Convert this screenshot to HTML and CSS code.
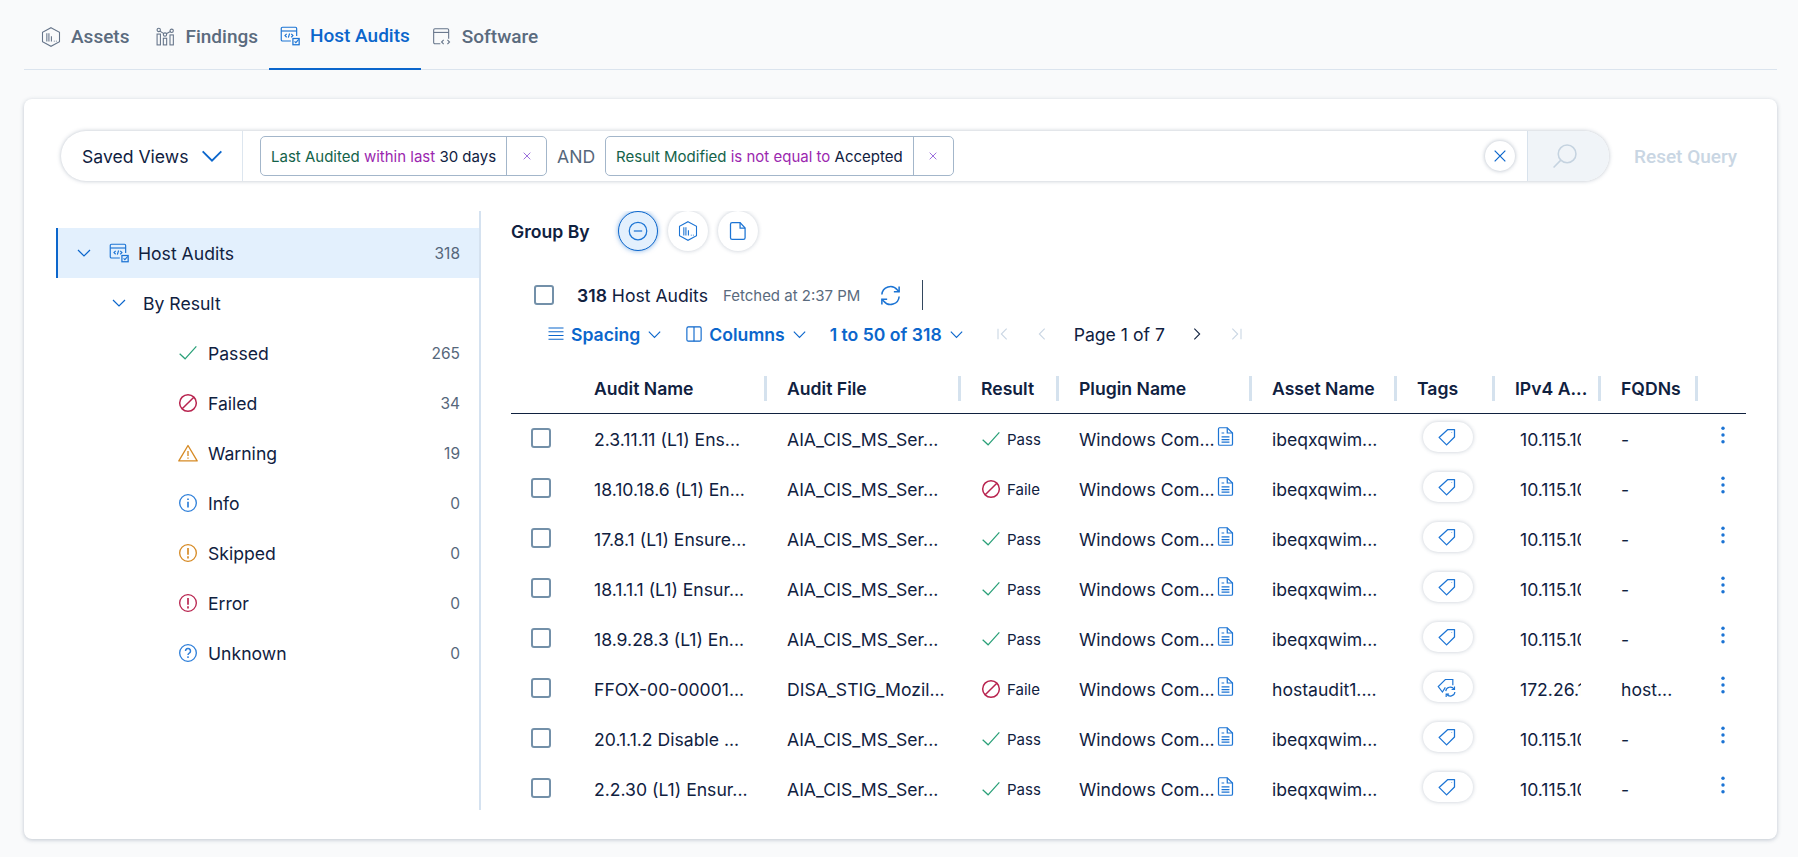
FILE: index.html
```html
<!DOCTYPE html>
<html lang="en">
  <head>
    <meta charset="UTF-8" />
    <title>Host Audits</title>
    <link rel="stylesheet" href="styles.css">
  </head>
  <body>
    <!-- icon sprite -->
    <svg class="sprite" xmlns="http://www.w3.org/2000/svg">
      <symbol id="i-asset" viewBox="0 0 24 24" fill="none" stroke="currentColor" stroke-width="1.3">
        <path d="M12 .8 22.2 6.400V17.600L12 23.200 1.800 17.600V6.400Z"/>
        <path d="M7 7.500v10M9.500 7.500v10M12.500 11v6.500M16 16.500v1M18.500 16.500v1"/>
      </symbol>
      <symbol id="i-findings" viewBox="0 0 24 24" fill="none" stroke="currentColor" stroke-width="1.3">
        <circle cx="4.500" cy="3.500" r="2"/><circle cx="12" cy="9" r="2"/><circle cx="20" cy="4.500" r="2"/>
        <path d="M6 5l4.500 3M13.500 8l5-2.500"/>
        <rect x="2.500" y="8.500" width="4" height="13"/><rect x="10" y="13.500" width="4" height="8"/><rect x="18" y="9.500" width="4" height="12"/>
      </symbol>
      <symbol id="i-host" viewBox="0 0 24 24" fill="none" stroke="currentColor" stroke-width="1.4">
        <path d="M13 18H3a1.500 1.500 0 0 1-1.500-1.500V3A1.500 1.500 0 0 1 3 1.500h15.500A1.500 1.500 0 0 1 20 3v9"/>
        <path d="M1.500 6h18.500"/>
        <path d="M8 9.500 6 11.500l2 2M13.500 9.500l2 2-2 2M11.500 9l-1.500 5"/>
        <rect x="15.500" y="15" width="7.500" height="7.500" stroke-width="1.500"/>
        <path d="M17.500 18.500l1.500 1.500 3.500-4" stroke-width="1.300"/>
      </symbol>
      <symbol id="i-soft" viewBox="0 0 24 24" fill="none" stroke="currentColor" stroke-width="1.300">
        <path d="M10 20H3.500A1.500 1.500 0 0 1 2 18.500V3.500A1.500 1.500 0 0 1 3.500 2h15A1.500 1.500 0 0 1 20 3.500V14"/>
        <path d="M2 6.500h18"/>
        <path d="M14 15.500l-2.500 2.500 2.500 2.500M18.500 15.500l2.500 2.500-2.500 2.500"/>
      </symbol>
      <symbol id="i-chev" viewBox="0 0 24 24" fill="none" stroke="currentColor" stroke-width="1.600">
        <path d="M4 8l8 8 8-8"/>
      </symbol>
      <symbol id="i-x" viewBox="0 0 24 24" fill="none" stroke="currentColor" stroke-width="1.800">
        <path d="M4 4l16 16M20 4 4 20"/>
      </symbol>
      <symbol id="i-search" viewBox="0 0 24 24" fill="none" stroke="currentColor" stroke-width="1.500">
        <circle cx="14.500" cy="9.500" r="8.500"/><path d="M8.500 15.500 1.500 22.500"/>
      </symbol>
      <symbol id="i-minus" viewBox="0 0 24 24" fill="none" stroke="currentColor" stroke-width="1.500">
        <circle cx="12" cy="12" r="10.500"/><path d="M7 12h10"/>
      </symbol>
      <symbol id="i-file" viewBox="0 0 24 24" fill="none" stroke="currentColor" stroke-width="1.500">
        <path d="M5 2h9.500l6 6.500V20a2 2 0 0 1-2 2H5a2 2 0 0 1-2-2V4a2 2 0 0 1 2-2Z"/><path d="M14.500 2v6.500h6"/>
      </symbol>
      <symbol id="i-doc" viewBox="0 0 24 24" fill="none" stroke="currentColor" stroke-width="1.400">
        <path d="M5 2h9l6 6v12.500a1.500 1.500 0 0 1-1.500 1.500h-13A1.500 1.500 0 0 1 4 20.500v-17A1.500 1.500 0 0 1 5 2Z"/>
        <path d="M14 2v6h6M7.500 8h3M7.500 12.500h9M7.500 15.500h9M7.500 18.500h9"/>
      </symbol>
      <symbol id="i-check" viewBox="0 0 24 24" fill="none" stroke="currentColor" stroke-width="1.500">
        <path d="M2 13l6.500 6L22 4"/>
      </symbol>
      <symbol id="i-fail" viewBox="0 0 24 24" fill="none" stroke="currentColor" stroke-width="1.800">
        <circle cx="12" cy="12" r="10"/><path d="M5 19 19 5"/>
      </symbol>
      <symbol id="i-warn" viewBox="0 0 24 24" fill="none" stroke="currentColor" stroke-width="1.600">
        <path d="M12 3 23 21.500H1Z" stroke-linejoin="round"/><path d="M12 9.500v6M12 17.500v1.500"/>
      </symbol>
      <symbol id="i-info" viewBox="0 0 24 24" fill="none" stroke="currentColor" stroke-width="1.600">
        <circle cx="12" cy="12" r="10"/><path d="M12 10.500v7M12 6.500v2" stroke-width="2"/>
      </symbol>
      <symbol id="i-bang" viewBox="0 0 24 24" fill="none" stroke="currentColor" stroke-width="1.600">
        <circle cx="12" cy="12" r="10"/><path d="M12 6v8M12 16v2.500" stroke-width="2"/>
      </symbol>
      <symbol id="i-help" viewBox="0 0 24 24" fill="none" stroke="currentColor" stroke-width="1.600">
        <circle cx="12" cy="12" r="10"/><path d="M9 9.500a3 3 0 1 1 4.500 2.600c-1 .6-1.500 1-1.500 2.400M12 16v2" stroke-width="1.800"/>
      </symbol>
      <symbol id="i-refresh" viewBox="0 0 24 24" fill="none" stroke="currentColor" stroke-width="1.600">
        <path d="M3 11a9 9 0 0 1 16-5l2 2M21 13a9 9 0 0 1-16 5l-2-2"/><path d="M21 2.500V8h-5.500M3 21.500V16h5.500"/>
      </symbol>
      <symbol id="i-lines" viewBox="0 0 24 24" fill="none" stroke="currentColor" stroke-width="1.500">
        <path d="M2 4h20M2 9h20M2 14h20M2 19h20"/>
      </symbol>
      <symbol id="i-cols" viewBox="0 0 24 24" fill="none" stroke="currentColor" stroke-width="1.500">
        <rect x="2.500" y="2.500" width="19" height="19" rx="2"/><path d="M12 2.500v19"/>
      </symbol>
      <symbol id="i-first" viewBox="0 0 24 24" fill="none" stroke="currentColor" stroke-width="1.600">
        <path d="M6 4v16M19 4l-8 8 8 8"/>
      </symbol>
      <symbol id="i-prev" viewBox="0 0 24 24" fill="none" stroke="currentColor" stroke-width="1.600">
        <path d="M16 4l-8 8 8 8"/>
      </symbol>
      <symbol id="i-tag" viewBox="0 0 24 24" fill="none" stroke="currentColor" stroke-width="1.500">
        <path d="M13 3h8v9l-9.500 9.500L2.500 12.500Z" stroke-linejoin="round"/><path d="M17.500 6.500v.5"/>
      </symbol>
      <symbol id="i-tagsync" viewBox="0 0 24 24" fill="none" stroke="currentColor" stroke-width="1.400">
        <path d="M10 12.500 6.500 18 1.500 11.500 10 3h9v7"/><path d="M10.500 17a5.500 5.500 0 0 1 10-2.500M21.500 18a5.500 5.500 0 0 1-10 2.500"/><path d="M21 11.500v3.500h-3.500M11 24v-3.500h3.500"/>
      </symbol>
      <symbol id="i-kebab" viewBox="0 0 24 24" fill="currentColor">
        <circle cx="12" cy="3" r="2.300"/><circle cx="12" cy="12" r="2.300"/><circle cx="12" cy="21" r="2.300"/>
      </symbol>
    </svg>

    <nav class="tabs">
      <a class="tab"><svg class="tab-icon"><use href="#i-asset"/></svg>Assets</a>
      <a class="tab"><svg class="tab-icon"><use href="#i-findings"/></svg>Findings</a>
      <a class="tab active"><svg class="tab-icon"><use href="#i-host"/></svg>Host Audits</a>
      <a class="tab"><svg class="tab-icon"><use href="#i-soft"/></svg>Software</a>
    </nav>

    <main class="card">
      <div class="query-row">
        <div class="query-bar">
          <div class="saved-views">Saved Views <svg class="saved-chev"><use href="#i-chev"/></svg></div>
          <div class="query-chips">
            <div class="chip">
              <span class="chip-text"><span class="c-field">Last Audited</span> <span class="c-op">within last</span> 30 days</span>
              <span class="chip-x"><svg><use href="#i-x"/></svg></span>
            </div>
            <span class="and">AND</span>
            <div class="chip">
              <span class="chip-text"><span class="c-field">Result Modified</span> <span class="c-op">is not equal to</span> Accepted</span>
              <span class="chip-x"><svg><use href="#i-x"/></svg></span>
            </div>
          </div>
          <button class="clear-btn"><svg><use href="#i-x"/></svg></button>
          <div class="search-btn"><svg><use href="#i-search"/></svg></div>
        </div>
        <span class="reset">Reset Query</span>
      </div>

      <div class="content">
        <aside class="tree">
          <div class="tree-row root">
            <svg class="tree-chev"><use href="#i-chev"/></svg>
            <svg class="tree-host"><use href="#i-host"/></svg>
            <span class="tree-label">Host Audits</span><span class="count">318</span>
          </div>
          <div class="tree-row group">
            <svg class="tree-chev"><use href="#i-chev"/></svg>
            <span class="tree-label">By Result</span>
          </div>
          <div class="tree-row leaf"><svg class="st green"><use href="#i-check"/></svg><span class="tree-label">Passed</span><span class="count">265</span></div>
          <div class="tree-row leaf"><svg class="st red"><use href="#i-fail"/></svg><span class="tree-label">Failed</span><span class="count">34</span></div>
          <div class="tree-row leaf"><svg class="st orange"><use href="#i-warn"/></svg><span class="tree-label">Warning</span><span class="count">19</span></div>
          <div class="tree-row leaf"><svg class="st blue"><use href="#i-info"/></svg><span class="tree-label">Info</span><span class="count">0</span></div>
          <div class="tree-row leaf"><svg class="st orange"><use href="#i-bang"/></svg><span class="tree-label">Skipped</span><span class="count">0</span></div>
          <div class="tree-row leaf"><svg class="st red"><use href="#i-bang"/></svg><span class="tree-label">Error</span><span class="count">0</span></div>
          <div class="tree-row leaf"><svg class="st blue"><use href="#i-help"/></svg><span class="tree-label">Unknown</span><span class="count">0</span></div>
        </aside>

        <section class="results">
          <div class="group-by">
            <strong>Group By</strong>
            <button class="round selected"><svg><use href="#i-minus"/></svg></button>
            <button class="round"><svg><use href="#i-asset"/></svg></button>
            <button class="round"><svg><use href="#i-file"/></svg></button>
          </div>

          <div class="summary">
            <span class="box"></span>
            <span class="total"><b>318</b> Host Audits</span>
            <span class="fetched">Fetched at 2:37 PM</span>
            <svg class="refresh"><use href="#i-refresh"/></svg>
            <span class="vline"></span>
          </div>

          <div class="toolbar">
            <span class="tool"><svg class="tool-icon"><use href="#i-lines"/></svg>Spacing<svg class="tool-chev"><use href="#i-chev"/></svg></span>
            <span class="tool"><svg class="tool-icon"><use href="#i-cols"/></svg>Columns<svg class="tool-chev"><use href="#i-chev"/></svg></span>
            <span class="tool">1 to 50 of 318<svg class="tool-chev"><use href="#i-chev"/></svg></span>
            <span class="pager">
              <svg class="pg off"><use href="#i-first"/></svg>
              <svg class="pg off"><use href="#i-prev"/></svg>
              <span class="page-text">Page 1 of 7</span>
              <svg class="pg flip"><use href="#i-prev"/></svg>
              <svg class="pg off flip"><use href="#i-first"/></svg>
            </span>
          </div>

          <div class="grid thead">
            <span></span>
            <span class="th">Audit Name</span>
            <span class="th">Audit File</span>
            <span class="th">Result</span>
            <span class="th">Plugin Name</span>
            <span class="th">Asset Name</span>
            <span class="th">Tags</span>
            <span class="th">IPv4 A...</span>
            <span class="th">FQDNs</span>
          </div>

          <div class="grid row">
            <span class="box"></span><span>2.3.11.11 (L1) Ens...</span><span>AIA_CIS_MS_Ser...</span>
            <span class="res"><svg class="green"><use href="#i-check"/></svg>Pass</span>
            <span class="plugin">Windows Com...<svg><use href="#i-doc"/></svg></span><span>ibeqxqwim...</span>
            <span class="pill"><svg><use href="#i-tag"/></svg></span><span class="ip">10.115.100.21</span><span>-</span>
            <svg class="kebab"><use href="#i-kebab"/></svg>
          </div>
          <div class="grid row">
            <span class="box"></span><span>18.10.18.6 (L1) En...</span><span>AIA_CIS_MS_Ser...</span>
            <span class="res"><svg class="red"><use href="#i-fail"/></svg>Faile</span>
            <span class="plugin">Windows Com...<svg><use href="#i-doc"/></svg></span><span>ibeqxqwim...</span>
            <span class="pill"><svg><use href="#i-tag"/></svg></span><span class="ip">10.115.100.21</span><span>-</span>
            <svg class="kebab"><use href="#i-kebab"/></svg>
          </div>
          <div class="grid row">
            <span class="box"></span><span>17.8.1 (L1) Ensure...</span><span>AIA_CIS_MS_Ser...</span>
            <span class="res"><svg class="green"><use href="#i-check"/></svg>Pass</span>
            <span class="plugin">Windows Com...<svg><use href="#i-doc"/></svg></span><span>ibeqxqwim...</span>
            <span class="pill"><svg><use href="#i-tag"/></svg></span><span class="ip">10.115.100.21</span><span>-</span>
            <svg class="kebab"><use href="#i-kebab"/></svg>
          </div>
          <div class="grid row">
            <span class="box"></span><span>18.1.1.1 (L1) Ensur...</span><span>AIA_CIS_MS_Ser...</span>
            <span class="res"><svg class="green"><use href="#i-check"/></svg>Pass</span>
            <span class="plugin">Windows Com...<svg><use href="#i-doc"/></svg></span><span>ibeqxqwim...</span>
            <span class="pill"><svg><use href="#i-tag"/></svg></span><span class="ip">10.115.100.21</span><span>-</span>
            <svg class="kebab"><use href="#i-kebab"/></svg>
          </div>
          <div class="grid row">
            <span class="box"></span><span>18.9.28.3 (L1) En...</span><span>AIA_CIS_MS_Ser...</span>
            <span class="res"><svg class="green"><use href="#i-check"/></svg>Pass</span>
            <span class="plugin">Windows Com...<svg><use href="#i-doc"/></svg></span><span>ibeqxqwim...</span>
            <span class="pill"><svg><use href="#i-tag"/></svg></span><span class="ip">10.115.100.21</span><span>-</span>
            <svg class="kebab"><use href="#i-kebab"/></svg>
          </div>
          <div class="grid row">
            <span class="box"></span><span>FFOX-00-00001...</span><span>DISA_STIG_Mozil...</span>
            <span class="res"><svg class="red"><use href="#i-fail"/></svg>Faile</span>
            <span class="plugin">Windows Com...<svg><use href="#i-doc"/></svg></span><span>hostaudit1....</span>
            <span class="pill"><svg><use href="#i-tagsync"/></svg></span><span class="ip">172.26.1.48</span><span>host...</span>
            <svg class="kebab"><use href="#i-kebab"/></svg>
          </div>
          <div class="grid row">
            <span class="box"></span><span>20.1.1.2 Disable ...</span><span>AIA_CIS_MS_Ser...</span>
            <span class="res"><svg class="green"><use href="#i-check"/></svg>Pass</span>
            <span class="plugin">Windows Com...<svg><use href="#i-doc"/></svg></span><span>ibeqxqwim...</span>
            <span class="pill"><svg><use href="#i-tag"/></svg></span><span class="ip">10.115.100.21</span><span>-</span>
            <svg class="kebab"><use href="#i-kebab"/></svg>
          </div>
          <div class="grid row">
            <span class="box"></span><span>2.2.30 (L1) Ensur...</span><span>AIA_CIS_MS_Ser...</span>
            <span class="res"><svg class="green"><use href="#i-check"/></svg>Pass</span>
            <span class="plugin">Windows Com...<svg><use href="#i-doc"/></svg></span><span>ibeqxqwim...</span>
            <span class="pill"><svg><use href="#i-tag"/></svg></span><span class="ip">10.115.100.21</span><span>-</span>
            <svg class="kebab"><use href="#i-kebab"/></svg>
          </div>
        </section>
      </div>
    </main>
  </body>
</html>
```

FILE: styles.css
```css
* {
  margin: 0;
  padding: 0;
  box-sizing: border-box;
}

body {
  height: 857px;
  overflow: hidden;
  padding: 0 21px 0 24px;
  background-color: #f9fafb;
  font-family: Inter, "Noto Sans", sans-serif;
  font-size: 17.6px;
  color: #10213f;
}

svg {
  display: block;
  flex: none;
}

button {
  border: none;
  background: none;
  font: inherit;
}

.sprite {
  width: 0;
  height: 0;
  overflow: hidden;
  position: absolute;
}

/* tabs */
.tabs {
  display: flex;
  height: 70px;
  padding-left: 6px;
  border-bottom: 1px solid #dbe4ee;
}

.tab {
  display: flex;
  align-items: center;
  gap: 10px;
  height: 70px;
  padding: 3px 11px 0;
  font-family: Roboto, sans-serif;
  font-weight: 500;
  font-size: 19px;
  color: #5b6b7e;
}

.tab:first-child {
  margin-right: 4px;
}

.tab-icon {
  width: 20px;
  height: 20px;
  color: #66758a;
}

.tab.active {
  color: #0b66cc;
  border-bottom: 2px solid #0b66cc;
}

.tab.active .tab-icon {
  color: #1c74d4;
}

/* card */
.card {
  height: 740px;
  margin-top: 29px;
  padding: 32px 31px 0 32px;
  background-color: #fff;
  border-radius: 8px;
  box-shadow: 0 1px 4px rgba(60, 80, 110, 0.3);
}

.query-row {
  display: flex;
  align-items: center;
  margin-left: 5px;
}

.query-bar {
  display: flex;
  align-items: center;
  width: 1548px;
  height: 50px;
  border-radius: 25px;
  background-color: #fff;
  box-shadow: 0 0 4px rgba(60, 80, 110, 0.35);
  overflow: hidden;
}

.saved-views {
  display: flex;
  align-items: center;
  gap: 10px;
  width: 182px;
  height: 50px;
  padding-left: 21px;
  border-right: 1px solid #dde6ef;
  white-space: nowrap;
}

.saved-chev {
  width: 28px;
  height: 28px;
  color: #0b66cc;
}

.query-chips {
  display: flex;
  align-items: center;
  flex: 1;
  padding-left: 17px;
}

.chip {
  display: flex;
  align-items: center;
  height: 40px;
  border: 1px solid #a3b6ca;
  border-radius: 5px;
  font-size: 15px;
}

.chip-text {
  padding: 0 10px;
  white-space: nowrap;
}

.c-field {
  color: #14634a;
}

.c-op {
  color: #9b27af;
}

.chip-x {
  display: flex;
  align-items: center;
  justify-content: center;
  width: 40px;
  height: 38px;
  border-left: 1px solid #a3b6ca;
  color: #7a3fd0;
}

.chip-x svg {
  width: 10px;
  height: 10px;
}

.and {
  width: 58px;
  text-align: center;
  color: #56677b;
}

.clear-btn {
  display: flex;
  align-items: center;
  justify-content: center;
  width: 30px;
  height: 30px;
  margin-right: 12px;
  border-radius: 50%;
  box-shadow: 0 0 4px rgba(60, 80, 110, 0.4);
  color: #0b66cc;
}

.clear-btn svg {
  width: 16px;
  height: 16px;
}

.search-btn {
  display: flex;
  align-items: center;
  justify-content: center;
  width: 82px;
  height: 50px;
  padding-right: 8px;
  background-color: #f0f4f8;
  border-left: 1px solid #d8e2ec;
  color: #c5d3e0;
}

.search-btn svg {
  width: 25px;
  height: 25px;
}

.reset {
  margin-left: 25px;
  font-family: Roboto, sans-serif;
  font-weight: 500;
  font-size: 19px;
  color: #c9d6e3;
  white-space: nowrap;
}

/* left tree */
.content {
  display: flex;
  height: 599px;
  margin-top: 30px;
}

.tree {
  width: 425px;
  padding-top: 17px;
  border-right: 2px solid #d5e2f0;
}

.tree-row {
  display: flex;
  align-items: center;
  height: 50px;
}

.tree-label {
  flex: 1;
}

.count {
  margin-right: 19px;
  font-size: 15.5px;
  color: #56677b;
}

.root {
  padding-left: 17px;
  background-color: #e3f0fd;
  border-left: 2px solid #0b66cc;
}

.tree-chev {
  width: 18px;
  height: 18px;
  color: #0b66cc;
}

.tree-host {
  width: 20px;
  height: 20px;
  margin: 0 9px 0 16px;
  color: #1c74d4;
}

.group {
  padding-left: 54px;
}

.group .tree-label {
  margin-left: 15px;
}

.leaf {
  padding-left: 122px;
}

.st {
  width: 20px;
  height: 20px;
  margin-right: 10px;
}

.green {
  color: #2aa078;
}

.red {
  color: #b8244f;
}

.orange {
  color: #d68a24;
}

.blue {
  color: #2e7fd9;
}

/* right side */
.results {
  width: 1235px;
  margin-left: 30px;
  overflow: hidden;
}

.group-by {
  display: flex;
  align-items: center;
  height: 40px;
  gap: 10px;
  padding: 1px 6px 1px 0;
}

.group-by strong {
  width: 97px;
  font-weight: 600;
}

.round {
  display: flex;
  align-items: center;
  justify-content: center;
  width: 40px;
  height: 40px;
  border-radius: 50%;
  box-shadow: 0 0 4px rgba(60, 80, 110, 0.3);
  color: #1c74d4;
}

.round svg {
  width: 20px;
  height: 20px;
}

.round.selected {
  background-color: #e3f0fd;
  border: 1px solid #0b66cc;
  box-shadow: 0 0 5px rgba(11, 102, 204, 0.5);
}

.summary {
  display: flex;
  align-items: center;
  height: 30px;
  margin-top: 29px;
  padding-left: 23px;
}

.box {
  display: block;
  width: 20px;
  height: 20px;
  border: 2px solid #7390a9;
  border-radius: 3px;
}

.total {
  margin-left: 23px;
}

.total b {
  font-weight: 600;
}

.fetched {
  margin-left: 15px;
  font-size: 15px;
  color: #5a6b7e;
}

.refresh {
  width: 23px;
  height: 23px;
  margin-left: 19px;
  color: #1c74d4;
}

.vline {
  width: 1px;
  height: 30px;
  margin-left: 20px;
  background-color: #33475f;
}

.toolbar {
  display: flex;
  align-items: center;
  height: 30px;
  margin-top: 9px;
  padding-left: 36px;
  gap: 22px;
  font-weight: 600;
  color: #0b66cc;
}

.tool {
  display: flex;
  align-items: center;
  white-space: nowrap;
}

.tool-icon {
  width: 18px;
  height: 18px;
  margin-right: 6px;
}

.tool-chev {
  width: 17px;
  height: 17px;
  margin-left: 6px;
}

.pager {
  display: flex;
  align-items: center;
  gap: 24px;
  margin-left: 7px;
  color: #10213f;
  font-weight: 400;
}

.pg {
  width: 16px;
  height: 16px;
  color: #10213f;
}

.pg.off {
  color: #c9d6e3;
}

.pg.flip {
  transform: scaleX(-1);
}

/* table */
.grid {
  display: grid;
  grid-template-columns: 83px 193px 194px 98px 193px 145px 98px 106px 97px 28px;
  align-items: center;
}

.thead {
  height: 50px;
  margin-top: 15px;
  margin-bottom: -1px;
  border-bottom: 1px solid #10213f;
  font-weight: 600;
}

.th {
  width: calc(100% - 20px);
  height: 25px;
  line-height: 25px;
  border-right: 3px solid #d5e2ee;
  white-space: nowrap;
  overflow: hidden;
}

.row {
  height: 50px;
  padding-top: 2px;
  white-space: nowrap;
}

.row .box {
  margin: -2px 0 0 20px;
}

.res {
  display: flex;
  align-items: center;
  gap: 6px;
  font-size: 15px;
}

.res svg {
  width: 20px;
  height: 20px;
}

.plugin {
  display: flex;
  align-items: center;
}

.plugin svg {
  width: 21px;
  height: 21px;
  margin-top: -6px;
  color: #1c74d4;
}

.pill {
  display: flex;
  align-items: center;
  justify-content: center;
  width: 50px;
  height: 30px;
  margin: -4px 0 0 6px;
  border-radius: 15px;
  box-shadow: 0 0 4px rgba(60, 80, 110, 0.3);
  color: #1c74d4;
}

.pill svg {
  width: 20px;
  height: 20px;
  margin-left: -3px;
}

.ip {
  width: 66px;
  padding-left: 5px;
  overflow: hidden;
}

.kebab {
  width: 18px;
  height: 18px;
  margin: -8px 0 0 -4px;
  color: #1c74d4;
}
```
